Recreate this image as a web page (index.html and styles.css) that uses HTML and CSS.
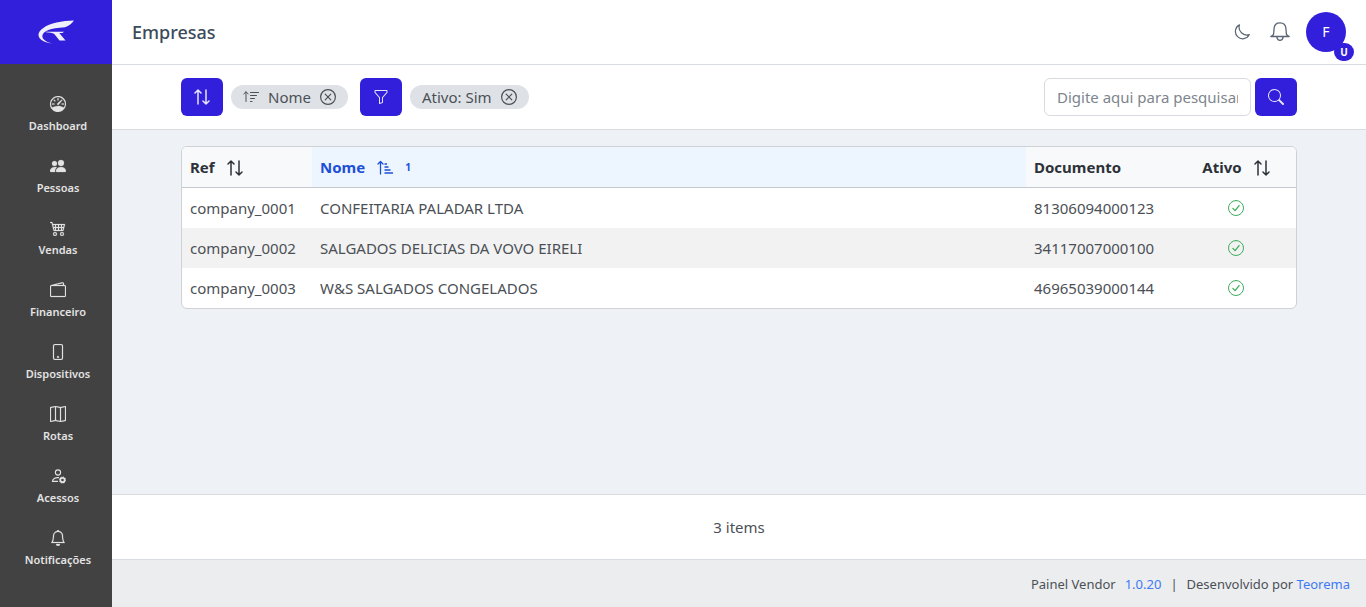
FILE: index.html
```html
<!DOCTYPE html>
<html lang="pt-BR">
<head>
<meta charset="utf-8">
<meta name="viewport" content="width=device-width, initial-scale=1">
<title>Empresas</title>
<link rel="stylesheet" href="styles.css">
</head>
<body>
<svg class="sprite" aria-hidden="true">
  <symbol id="speedometer" viewBox="0 0 16 16"><path d="M8 2a.5.5 0 0 1 .5.5V4a.5.5 0 0 1-1 0V2.500A.5.5 0 0 1 8 2M3.732 3.732a.5.5 0 0 1 .707 0l.915.914a.5.5 0 1 1-.708.708l-.914-.915a.5.5 0 0 1 0-.707M2 8a.5.5 0 0 1 .5-.5h1.586a.5.5 0 0 1 0 1H2.500A.5.5 0 0 1 2 8m9.500 0a.5.5 0 0 1 .5-.5h1.500a.5.5 0 0 1 0 1H12a.5.5 0 0 1-.5-.5m.754-4.246a.39.39 0 0 0-.527-.02L7.547 7.310A.91.91 0 1 0 8.850 8.569l3.434-4.297a.39.39 0 0 0-.029-.518z"/><path fill-rule="evenodd" d="M6.664 15.889A8 8 0 1 1 9.336.11a8 8 0 0 1-2.672 15.780zm-4.665-4.283A11.950 11.950 0 0 1 8 10c2.186 0 4.236.585 6.001 1.606a7 7 0 1 0-12.002 0"/></symbol>
  <symbol id="people" viewBox="0 0 16 16"><path d="M7 14s-1 0-1-1 1-4 5-4 5 3 5 4-1 1-1 1zm4-6a3 3 0 1 0 0-6 3 3 0 0 0 0 6m-5.784 6A2.240 2.240 0 0 1 5 13c0-1.355.68-2.750 1.936-3.720A6.300 6.300 0 0 0 5 9c-4 0-5 3-5 4s1 1 1 1zM4.500 8a2.500 2.500 0 1 0 0-5 2.500 2.500 0 0 0 0 5"/></symbol>
  <symbol id="cart" viewBox="0 0 16 16"><path d="M0 2.500A.5.5 0 0 1 .5 2H2a.5.5 0 0 1 .485.379L2.890 4H14.500a.5.5 0 0 1 .485.621l-1.500 6A.5.5 0 0 1 13 11H4a.5.5 0 0 1-.485-.379L1.610 3H.5a.5.5 0 0 1-.5-.5M3.140 5l.5 2H5V5zM6 5v2h2V5zm3 0v2h2V5zm3 0v2h1.360l.5-2zm1.110 3H12v2h.61zM11 8H9v2h2zM8 8H6v2h2zM5 8H3.890l.5 2H5zm0 5a1 1 0 1 0 0 2 1 1 0 0 0 0-2m-2 1a2 2 0 1 1 4 0 2 2 0 0 1-4 0m9-1a1 1 0 1 0 0 2 1 1 0 0 0 0-2m-2 1a2 2 0 1 1 4 0 2 2 0 0 1-4 0"/></symbol>
  <symbol id="wallet" viewBox="0 0 16 16"><path d="M12.136.326A1.500 1.500 0 0 1 14 1.780V3h.5A1.500 1.500 0 0 1 16 4.500v9a1.500 1.500 0 0 1-1.500 1.500h-13A1.500 1.500 0 0 1 0 13.500v-9a1.500 1.500 0 0 1 1.432-1.499zM5.562 3H13V1.780a.5.5 0 0 0-.621-.484zM1.500 4a.5.5 0 0 0-.5.5v9a.5.5 0 0 0 .5.5h13a.5.5 0 0 0 .5-.5v-9a.5.5 0 0 0-.5-.5z"/></symbol>
  <symbol id="phone" viewBox="0 0 16 16"><path d="M11 1a1 1 0 0 1 1 1v12a1 1 0 0 1-1 1H5a1 1 0 0 1-1-1V2a1 1 0 0 1 1-1zM5 0a2 2 0 0 0-2 2v12a2 2 0 0 0 2 2h6a2 2 0 0 0 2-2V2a2 2 0 0 0-2-2z"/><path d="M8 14a1 1 0 1 0 0-2 1 1 0 0 0 0 2"/></symbol>
  <symbol id="map" viewBox="0 0 16 16"><path fill-rule="evenodd" d="M15.817.113A.5.5 0 0 1 16 .5v14a.5.5 0 0 1-.402.49l-5 1a.5.5 0 0 1-.196 0L5.500 15.010l-4.902.98A.5.5 0 0 1 0 15.500v-14a.5.5 0 0 1 .402-.49l5-1a.5.5 0 0 1 .196 0L10.500.99l4.902-.98a.5.5 0 0 1 .415.103M10 1.910l-4-.8v12.980l4 .8zm1 12.980 4-.8V1.110l-4 .8zm-6-.8V1.110l-4 .8v12.980z"/></symbol>
  <symbol id="person-gear" viewBox="0 0 16 16"><g fill="none" stroke="currentColor"><circle cx="8" cy="4.500" r="2.600" stroke-width="1.100"/><path stroke-width="1.200" d="M9 9.600C5 9.200 2.600 11 2.500 13.400H8"/><circle cx="12.500" cy="12" r="2.200" stroke-width="1.800"/><circle cx="12.500" cy="12" r="3.200" stroke-width=".8" stroke-dasharray="1.200 1.313"/></g></symbol>
  <symbol id="bell" viewBox="0 0 16 16"><path d="M8 16a2 2 0 0 0 2-2H6a2 2 0 0 0 2 2M8 1.918l-.797.161A4 4 0 0 0 4 6c0 .628-.134 2.197-.459 3.742-.16.767-.376 1.566-.663 2.258h10.244c-.287-.692-.502-1.490-.663-2.258C12.134 8.197 12 6.628 12 6a4 4 0 0 0-3.203-3.920zM14.220 12c.223.447.481.801.78 1H1c.299-.199.557-.553.78-1C2.680 10.200 3 6.880 3 6c0-2.420 1.720-4.440 4.005-4.901a1 1 0 1 1 1.990 0A5 5 0 0 1 13 6c0 .88.32 4.200 1.220 6"/></symbol>
  <symbol id="bell-thin" viewBox="0 0 20 20"><g fill="none" stroke="currentColor" stroke-width="1.300" stroke-linejoin="round"><path d="M.8 14.500h18.400c-1.900-.5-2.700-1.500-2.900-3.200L15.900 6.200C15.600 2.500 13.200.8 10 .8S4.400 2.500 4.100 6.200l-.4 5.100c-.2 1.700-1 2.700-2.900 3.200z"/><path d="M6.800 14.800c.4 2.400 1.600 3.500 3.200 3.500s2.800-1.100 3.200-3.500"/></g></symbol>
  <symbol id="moon" viewBox="0 0 16 16"><path fill="none" stroke="currentColor" stroke-width="1.200" stroke-linejoin="round" d="M5.500.9A7.300 7.300 0 1 0 15.300 10.600 7.700 7.700 0 0 1 5.500.9z"/></symbol>
  <symbol id="sort" viewBox="0 0 16 16"><path fill="none" stroke="currentColor" stroke-width="1.500" stroke-linecap="round" stroke-linejoin="round" d="M4 15V1M1 4l3-3 3 3M12 1v14M9 12l3 3 3-3"/></symbol>
  <symbol id="sort-lines" viewBox="0 0 16 16"><path fill="none" stroke="currentColor" stroke-linecap="round" stroke-linejoin="round" d="M3 12.500V2.800M.8 5 3 2.800 5.200 5M7.500 3.500h8M7.500 6.500h6M7.500 9.500h4M7.500 12.500h1.500"/></symbol>
  <symbol id="sort-up" viewBox="0 0 16 16"><path fill="none" stroke="currentColor" stroke-width="1.300" stroke-linecap="round" stroke-linejoin="round" d="M3.500 14V1.500M1 4l2.500-2.500L6 4"/><path fill="none" stroke="currentColor" stroke-width="1.500" d="M7.500 4h2.500M7.500 7h4M7.500 10h6M7.500 13H16"/></symbol>
  <symbol id="funnel" viewBox="0 0 16 16"><path d="M1.500 1.500A.5.5 0 0 1 2 1h12a.5.5 0 0 1 .5.5v2a.5.5 0 0 1-.128.334L10 8.692V13.500a.5.5 0 0 1-.342.474l-3 1A.5.5 0 0 1 6 14.500V8.692L1.628 3.834A.5.5 0 0 1 1.500 3.500zm1 .5v1.308l4.372 4.858A.5.5 0 0 1 7 8.500v5.306l2-.666V8.500a.5.5 0 0 1 .128-.334L13.500 3.308V2z"/></symbol>
  <symbol id="x-circle" viewBox="0 0 16 16"><path fill="none" stroke="currentColor" stroke-width="1.200" stroke-linecap="round" d="M8 .6a7.400 7.400 0 1 0 0 14.800A7.400 7.400 0 0 0 8 .6zM5.200 5.200l5.600 5.600M10.800 5.200l-5.600 5.600"/></symbol>
  <symbol id="check-circle" viewBox="0 0 16 16"><path fill="none" stroke="currentColor" stroke-linecap="round" stroke-linejoin="round" d="M8 .5a7.500 7.500 0 1 0 0 15 7.500 7.500 0 0 0 0-15z"/><path fill="none" stroke="currentColor" stroke-width="1.300" stroke-linecap="round" stroke-linejoin="round" d="m4.900 8.400 2.200 2.200 4-5"/></symbol>
  <symbol id="search" viewBox="0 0 16 16"><path d="M11.742 10.344a6.500 6.500 0 1 0-1.397 1.398h-.001q.044.06.098.115l3.850 3.850a1 1 0 0 0 1.415-1.414l-3.850-3.850a1 1 0 0 0-.115-.1zM12 6.500a5.500 5.500 0 1 1-11 0 5.500 5.500 0 0 1 11 0"/></symbol>
</svg>

<div class="app">
  <aside class="sidebar">
    <a class="brand" href="#" aria-label="Início">
      <svg width="36" height="24" viewBox="0 0 36 24" aria-hidden="true"><path d="M36 .6C24 1 12 2.800 5 8.200-.5 12-1 16.500 3.500 20c2.600 2 6 3 10.800 3.500C8 21.800 3.800 18.900 4.400 15.500 5.200 11 12 8 27 7.200 30 6.500 34 3.500 36 .6z"/><path d="M8 11.700h18l-1.500 1.400h-3.200l6.200 7.400h-6L16.500 14.200c-2-1.500-5-1.600-8.500-1.900z"/></svg>
    </a>
    <nav class="menu" aria-label="Menu principal">
      <a href="#"><svg class="icon"><use href="#speedometer"/></svg><span>Dashboard</span></a>
      <a href="#"><svg class="icon"><use href="#people"/></svg><span>Pessoas</span></a>
      <a href="#"><svg class="icon"><use href="#cart"/></svg><span>Vendas</span></a>
      <a href="#"><svg class="icon"><use href="#wallet"/></svg><span>Financeiro</span></a>
      <a href="#"><svg class="icon"><use href="#phone"/></svg><span>Dispositivos</span></a>
      <a href="#"><svg class="icon"><use href="#map"/></svg><span>Rotas</span></a>
      <a href="#"><svg class="icon"><use href="#person-gear"/></svg><span>Acessos</span></a>
      <a href="#"><svg class="icon"><use href="#bell"/></svg><span>Notificações</span></a>
    </nav>
  </aside>

  <div class="page">
    <header class="topbar">
      <h1>Empresas</h1>
      <div class="actions">
        <button class="plain" type="button" aria-label="Modo escuro"><svg class="icon"><use href="#moon"/></svg></button>
        <button class="plain" type="button" aria-label="Notificações"><svg class="icon icon-lg"><use href="#bell-thin"/></svg></button>
        <button class="avatar" type="button">F<span class="avatar-badge">U</span></button>
      </div>
    </header>

    <div class="toolbar">
      <div class="container toolbar-row">
        <div class="filters">
          <button class="btn" type="button" aria-label="Ordenar"><svg class="icon"><use href="#sort"/></svg></button>
          <span class="chip"><svg class="icon"><use href="#sort-lines"/></svg><span>Nome</span><button class="plain" type="button" aria-label="Remover ordenação"><svg class="icon"><use href="#x-circle"/></svg></button></span>
          <button class="btn btn-filter" type="button" aria-label="Filtrar"><svg class="icon"><use href="#funnel"/></svg></button>
          <span class="chip"><span>Ativo: Sim</span><button class="plain" type="button" aria-label="Remover filtro"><svg class="icon"><use href="#x-circle"/></svg></button></span>
        </div>
        <form class="search">
          <input type="text" placeholder="Digite aqui para pesquisar" aria-label="Pesquisar">
          <button class="btn" type="button" aria-label="Buscar"><svg class="icon"><use href="#search"/></svg></button>
        </form>
      </div>
    </div>

    <main class="content">
      <div class="container">
        <div class="card">
          <table>
            <colgroup><col class="col-ref"><col><col class="col-doc"><col class="col-active"></colgroup>
            <thead>
              <tr>
                <th scope="col"><span class="head">Ref<svg class="icon"><use href="#sort"/></svg></span></th>
                <th scope="col" class="sorted" aria-sort="ascending"><span class="head">Nome<svg class="icon"><use href="#sort-up"/></svg><small>1</small></span></th>
                <th scope="col">Documento</th>
                <th scope="col" class="center"><span class="head">Ativo<svg class="icon"><use href="#sort"/></svg></span></th>
              </tr>
            </thead>
            <tbody>
              <tr><td>company_0001</td><td>CONFEITARIA PALADAR LTDA</td><td>81306094000123</td><td class="center"><svg class="icon check" role="img" aria-label="Sim"><use href="#check-circle"/></svg></td></tr>
              <tr><td>company_0002</td><td>SALGADOS DELICIAS DA VOVO EIRELI</td><td>34117007000100</td><td class="center"><svg class="icon check" role="img" aria-label="Sim"><use href="#check-circle"/></svg></td></tr>
              <tr><td>company_0003</td><td>W&amp;S SALGADOS CONGELADOS</td><td>46965039000144</td><td class="center"><svg class="icon check" role="img" aria-label="Sim"><use href="#check-circle"/></svg></td></tr>
            </tbody>
          </table>
        </div>
      </div>
    </main>

    <div class="summary">3 items</div>
    <footer class="footer">
      <span>Painel Vendor</span><a href="#">1.0.20</a><span>|</span><span>Desenvolvido por <a href="#">Teorema</a></span>
    </footer>
  </div>
</div>
</body>
</html>
```
FILE: styles.css
```css
* { box-sizing: border-box; }
body {
  margin: 0;
  font-family: "Noto Sans", "Open Sans", sans-serif;
  font-size: 15px;
  line-height: 24px;
  color: #4b5056;
}
a { color: #3f7af5; text-decoration: none; }
button, input { font: inherit; }
.sprite { display: none; }
.icon { width: 16px; height: 16px; fill: currentColor; flex: none; }
.icon-lg { width: 20px; height: 20px; }

.app { display: flex; min-height: 100vh; }

.sidebar { width: 112px; flex: none; background: #424242; }
.brand {
  display: flex;
  align-items: center;
  justify-content: center;
  height: 64px;
  background: #321fdb;
  fill: #f0effc;
}
.menu { padding: 20px 0 0 4px; }
.menu a {
  display: flex;
  flex-direction: column;
  align-items: center;
  gap: 5px;
  height: 62px;
  padding-top: 12px;
  color: #e3e3e3;
  font-size: 11px;
  font-weight: 600;
  line-height: 18px;
}
.menu .icon { stroke: currentColor; stroke-width: 0.2; }

.page { display: flex; flex: 1; flex-direction: column; min-width: 0; }
.topbar {
  display: flex;
  align-items: center;
  justify-content: space-between;
  height: 65px;
  padding: 0 20px;
  border-bottom: 1px solid #d8dbe0;
}
h1 { margin: 0; font-size: 18px; font-weight: 500; color: #3c4b5a; }
.actions { display: flex; align-items: center; gap: 20px; color: #5b6675; }
.actions .plain:nth-child(2) { margin-right: -4px; }
.plain {
  display: flex;
  padding: 0;
  border: 0;
  background: none;
  color: inherit;
  cursor: pointer;
}
.avatar {
  position: relative;
  width: 40px;
  height: 40px;
  padding: 0;
  border: 0;
  border-radius: 50%;
  background: #321fdb;
  color: #fff;
  font-size: 14px;
}
.avatar-badge {
  position: absolute;
  right: -8px;
  bottom: -9px;
  width: 20px;
  border-radius: 10px;
  background: #321fdb;
  font-size: 10px;
  font-weight: 700;
  line-height: 18px;
}

.container { width: 100%; max-width: 1140px; margin: 0 auto; padding: 0 12px; }
.toolbar { padding: 13px 0; border-bottom: 1px solid #d8dbe0; }
.toolbar-row { display: flex; align-items: center; justify-content: space-between; }
.filters { display: flex; align-items: center; gap: 8px; }
.btn {
  display: flex;
  align-items: center;
  justify-content: center;
  width: 42px;
  height: 38px;
  padding: 0;
  border: 0;
  border-radius: 6px;
  background: #321fdb;
  color: #e6e3fb;
}
.btn-filter { margin-left: 4px; }
.chip {
  display: flex;
  align-items: center;
  gap: 9px;
  height: 24px;
  padding: 0 12px;
  border-radius: 12px;
  background: #dee2e6;
}
.search { display: flex; gap: 4px; }
.search input {
  width: 207px;
  height: 38px;
  padding: 0 12px;
  border: 1px solid #d8dbe0;
  border-radius: 6px;
  color: #4b5056;
}
.search input::placeholder { color: #7d858d; }

.content { flex: 1; padding: 16px 0; background: #eef1f6; }
.card { overflow: hidden; border: 1px solid #cfd1d4; border-radius: 6px; background: #fff; }
table { width: 100%; border-collapse: collapse; table-layout: fixed; }
.col-ref { width: 130px; }
.col-doc { width: 150px; }
.col-active { width: 120px; }
th, td { padding: 8px; text-align: left; font-weight: 400; }
th {
  background: #f8f9fb;
  border-bottom: 1px solid #c4c9d0;
  color: #2d3138;
  font-weight: 700;
}
.head { display: inline-flex; align-items: center; gap: 12px; vertical-align: top; }
.head .icon { margin-top: 2px; }
.sorted { background: #edf5ff; color: #1d4fd7; }
small { font-size: 10px; }
tbody tr:nth-child(even) { background: #f2f2f2; }
.center { text-align: center; }
.check { display: block; margin: 0 auto; color: #3fae5b; }

.summary {
  padding: 20px;
  border-top: 1px solid #d8dbe0;
  text-align: center;
}
.footer {
  display: flex;
  justify-content: flex-end;
  gap: 9px;
  padding: 12px 16px 11px;
  border-top: 1px solid #d8dbe0;
  background: #ebedef;
  font-size: 13px;
}
```
